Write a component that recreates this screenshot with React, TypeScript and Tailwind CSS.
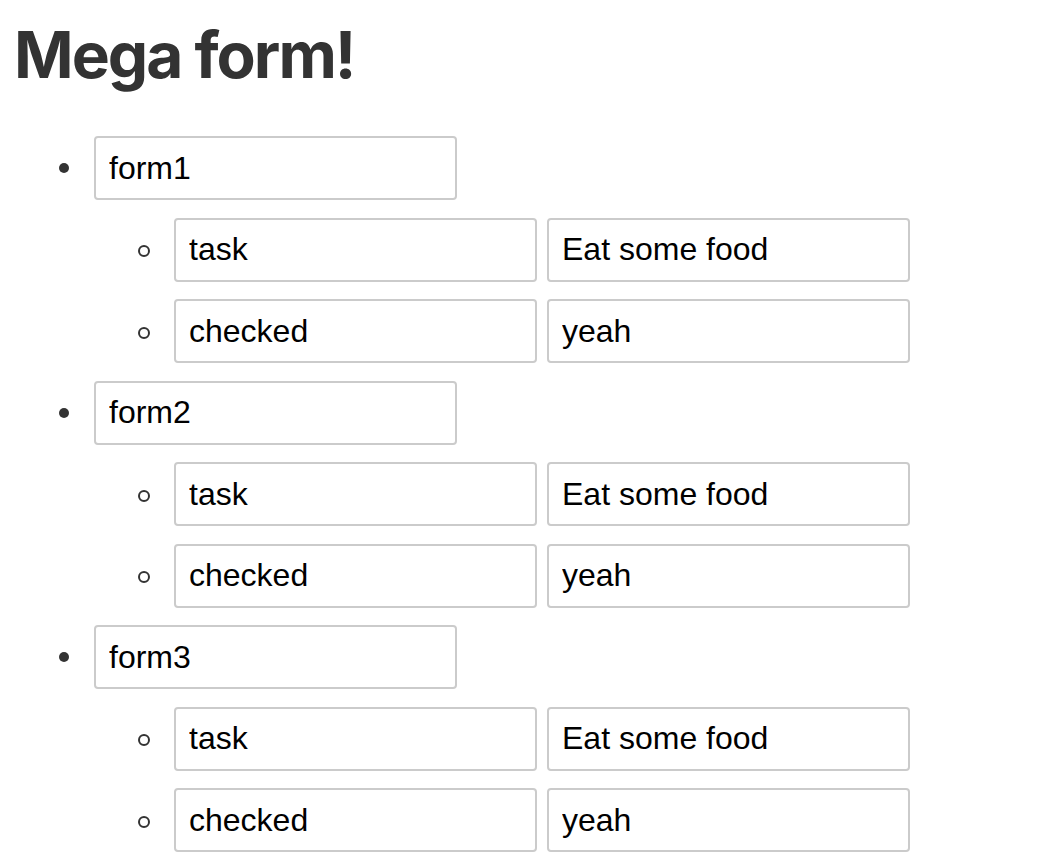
const forms = ["form1", "form2", "form3"];

const fields = [
  { key: "task", value: "Eat some food" },
  { key: "checked", value: "yeah" },
];

const inputCls =
  "h-[64px] w-[363px] rounded-[4px] border-2 border-[#cbcbcb] bg-white px-[13px] text-[32px] text-black outline-none [font-family:'Liberation_Sans',Arial,sans-serif]";

const Disc = () => (
  <span className="flex w-[80px] shrink-0 justify-end pr-[25px]">
    <span className="h-[10px] w-[10px] rounded-full bg-[#333]" />
  </span>
);

const Ring = () => (
  <span className="flex w-[80px] shrink-0 justify-end pr-[24px] pt-[3px]">
    <span className="h-[12px] w-[12px] rounded-full border-2 border-[#333]" />
  </span>
);

export default function App() {
  return (
    <div className="min-h-screen bg-white px-[14px] pt-[16px] text-[#333]">
      <h1 className="text-[64px] font-bold leading-[78px] tracking-[-2px] [font-family:Inter,'Liberation_Sans',sans-serif]">
        Mega form!
      </h1>

      <ul className="mt-[42px] flex flex-col gap-[17.5px]">
        {forms.map((name) => (
          <li key={name} className="flex flex-col gap-[17.5px]">
            <div className="flex items-center">
              <Disc />
              <input className={inputCls} defaultValue={name} />
            </div>
            {fields.map((f) => (
              <div key={f.key} className="flex items-center pl-[80px]">
                <Ring />
                <div className="flex gap-[10px]">
                  <input className={inputCls} defaultValue={f.key} />
                  <input className={inputCls} defaultValue={f.value} />
                </div>
              </div>
            ))}
          </li>
        ))}
      </ul>
    </div>
  );
}
